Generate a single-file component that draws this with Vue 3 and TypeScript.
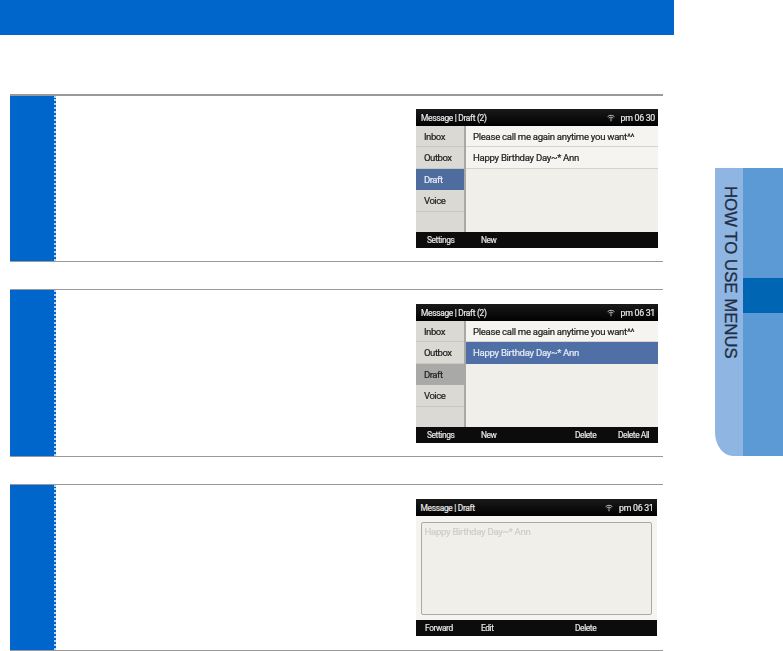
<script setup lang="ts">
interface Row { label: string; kind?: string }
interface Step {
  title: string; time: string; tabs?: { label: string; kind?: string }[];
  rows?: Row[]; body?: string; keys: string[]; cls: string;
}
const tabs = (kind: string) => [
  { label: 'Inbox' }, { label: 'Outbox' }, { label: 'Draft', kind }, { label: 'Voice' }, { label: '' },
];
const steps: Step[] = [
  { cls: 'first', title: 'Message | Draft (2)', time: 'pm 06 30', tabs: tabs('active'),
    rows: [{ label: 'Please call me again anytime you want^^' }, { label: 'Happy Birthday Day~* Ann' }],
    keys: ['Settings', 'New', '', ''] },
  { cls: 'second', title: 'Message | Draft (2)', time: 'pm 06 31', tabs: tabs('muted'),
    rows: [{ label: 'Please call me again anytime you want^^' }, { label: 'Happy Birthday Day~* Ann', kind: 'selected' }],
    keys: ['Settings', 'New', 'Delete', 'Delete All'] },
  { cls: 'third', title: 'Message | Draft', time: 'pm 06 31', body: 'Happy Birthday Day~* Ann',
    keys: ['Forward', 'Edit', 'Delete', ''] },
];
</script>

<template>
  <div class="page">
    <main class="main">
      <div class="banner"></div>
      <section v-for="s in steps" :key="s.cls" class="step" :class="s.cls">
        <div class="num"></div>
        <div class="content">
          <div class="screen">
            <div class="topbar">
              <span>{{ s.title }}</span>
              <span class="status">
                <svg width="8" height="8" viewBox="0 0 11 10" fill="none" stroke="#d8d8d8" stroke-width="1.2">
                  <path d="M.8 3.2C3.4.6 7.6.6 10.2 3.2" />
                  <path d="M2.4 5.1c1.7-1.6 4.5-1.6 6.2 0" />
                  <path d="M4 6.9c.9-.8 2.1-.8 3 0" />
                  <circle cx="5.5" cy="8.7" r=".8" fill="#d8d8d8" stroke="none" />
                </svg>
                <span class="time">{{ s.time }}</span>
              </span>
            </div>
            <div v-if="s.tabs" class="split">
              <div class="tabs">
                <div v-for="t in s.tabs" :key="t.label" class="tab" :class="t.kind">{{ t.label }}</div>
              </div>
              <div class="list">
                <div v-for="r in s.rows" :key="r.label" class="row" :class="r.kind">{{ r.label }}</div>
              </div>
            </div>
            <div v-else class="detail">
              <div class="box">{{ s.body }}</div>
            </div>
            <div class="keys">
              <span v-for="(k, j) in s.keys" :key="j">{{ k }}</span>
            </div>
          </div>
        </div>
      </section>
    </main>
    <aside class="side">
      <div class="side-label"><span>HOW TO USE MENUS</span></div>
      <div class="side-color">
        <div class="side-current"></div>
      </div>
    </aside>
  </div>
</template>

<style>
html, body { margin: 0; background: #fff; overflow: hidden; }
</style>

<style scoped>
.page {
  display: flex;
  width: 783px;
  height: 651px;
  overflow: hidden;
  background: #fff;
  font-family: Roboto, "Liberation Sans", sans-serif;
}
.main { width: 674px; flex: none; }
.banner { height: 35px; background: #0066cc; margin-bottom: 59px; }
.step {
  width: 653px;
  margin-left: 10px;
  margin-bottom: 27px;
  display: flex;
  border-top: 1px solid #999;
  border-bottom: 1px solid #999;
  height: 165px;
}
.step.first { border-top-width: 2px; }
.step.second { height: 166px; }
.step.third { margin-bottom: 0; }
.num {
  width: 44px;
  flex: none;
  background: #0066cc;
  border-right: 2px dotted #b5d2f0;
}
.content { flex: 1; padding: 14px 5px 0 360px; min-width: 0; }
.first .content { padding-top: 13px; }
.third .content { padding-left: 359.5px; }
.screen {
  width: 242px;
  height: 139px;
  display: flex;
  flex-direction: column;
  font-size: 9.6px;
  letter-spacing: -0.3px;
  color: #222;
  -webkit-text-stroke: 0.2px currentColor;
  filter: blur(0.4px);
}
.third .screen { height: 137px; width: 241px; }
.topbar {
  height: 17px;
  flex: none;
  background: linear-gradient(#1a1a1a, #000);
  color: #e6e6e6;
  font-size: 8.4px;
  display: flex;
  align-items: center;
  justify-content: space-between;
  padding: 0 3px 0 5px;
}
.status { display: flex; align-items: center; gap: 6px; }
.time { font-size: 8.8px; }
.split { flex: 1; display: flex; min-height: 0; }
.tabs {
  width: 50px;
  flex: none;
  box-sizing: border-box;
  display: flex;
  flex-direction: column;
  background: #dbd9d3;
  border-right: 2px solid #a8a8a4;
}
.tab {
  height: 21.4px;
  padding-left: 8px;
  line-height: 21px;
  letter-spacing: -0.5px;
  box-sizing: border-box;
  border-bottom: 1px solid #c8c7c2;
}
.tab:last-child { border-bottom: 0; flex: 1; }
.tab.active { background: #4e6c9e; color: #e8edf5; border-bottom: 0; }
.tab.muted { background: #a9a9a7; border-bottom: 0; }
.list { flex: 1; background: #f1efe9; min-width: 0; }
.row {
  height: 21.4px;
  padding-left: 7px;
  line-height: 21px;
  box-sizing: border-box;
  white-space: nowrap;
  overflow: hidden;
  background: #f5f4f0;
  border-bottom: 1px solid #d5d3cd;
}
.row.selected { background: #4f6fa6; color: #e6ecf6; border-bottom: 0; }
.detail { flex: 1; background: #f5f4f0; padding: 6px 5px 5px 5px; display: flex; min-height: 0; }
.box {
  flex: 1;
  background: #f0efe9;
  border: 1px solid #a9a9a5;
  border-radius: 2px;
  padding: 3px;
  color: #cfcdc8;
}
.keys {
  height: 16px;
  flex: none;
  background: #0c0c0c;
  color: #e2e2e2;
  font-size: 8.4px;
  letter-spacing: -0.4px;
  line-height: 17px;
  display: grid;
  grid-template-columns: 54px 94px 43px 1fr;
  padding-left: 11px;
  box-sizing: border-box;
  white-space: nowrap;
}
.third .keys { padding-left: 9.5px; grid-template-columns: 56px 94px 43px 1fr; }
.side {
  width: 68px;
  height: 288px;
  margin: 168px 0 0 41px;
  flex: none;
  display: flex;
  border-bottom-left-radius: 18px 24px;
  overflow: hidden;
}
.side-label {
  width: 28px;
  background: #8fb6e2;
  color: #1f2d44;
  display: flex;
  justify-content: center;
}
.side-label span {
  writing-mode: vertical-rl;
  font-family: "Liberation Sans", Arial, sans-serif;
  font-size: 16.8px;
  -webkit-text-stroke: 0.3px #1f2d44;
  padding-top: 18px;
  padding-left: 1px;
  white-space: nowrap;
}
.side-color { flex: 1; background: #5b9ad4; padding-top: 110px; }
.side-current { height: 35px; background: #0066b3; }
</style>
